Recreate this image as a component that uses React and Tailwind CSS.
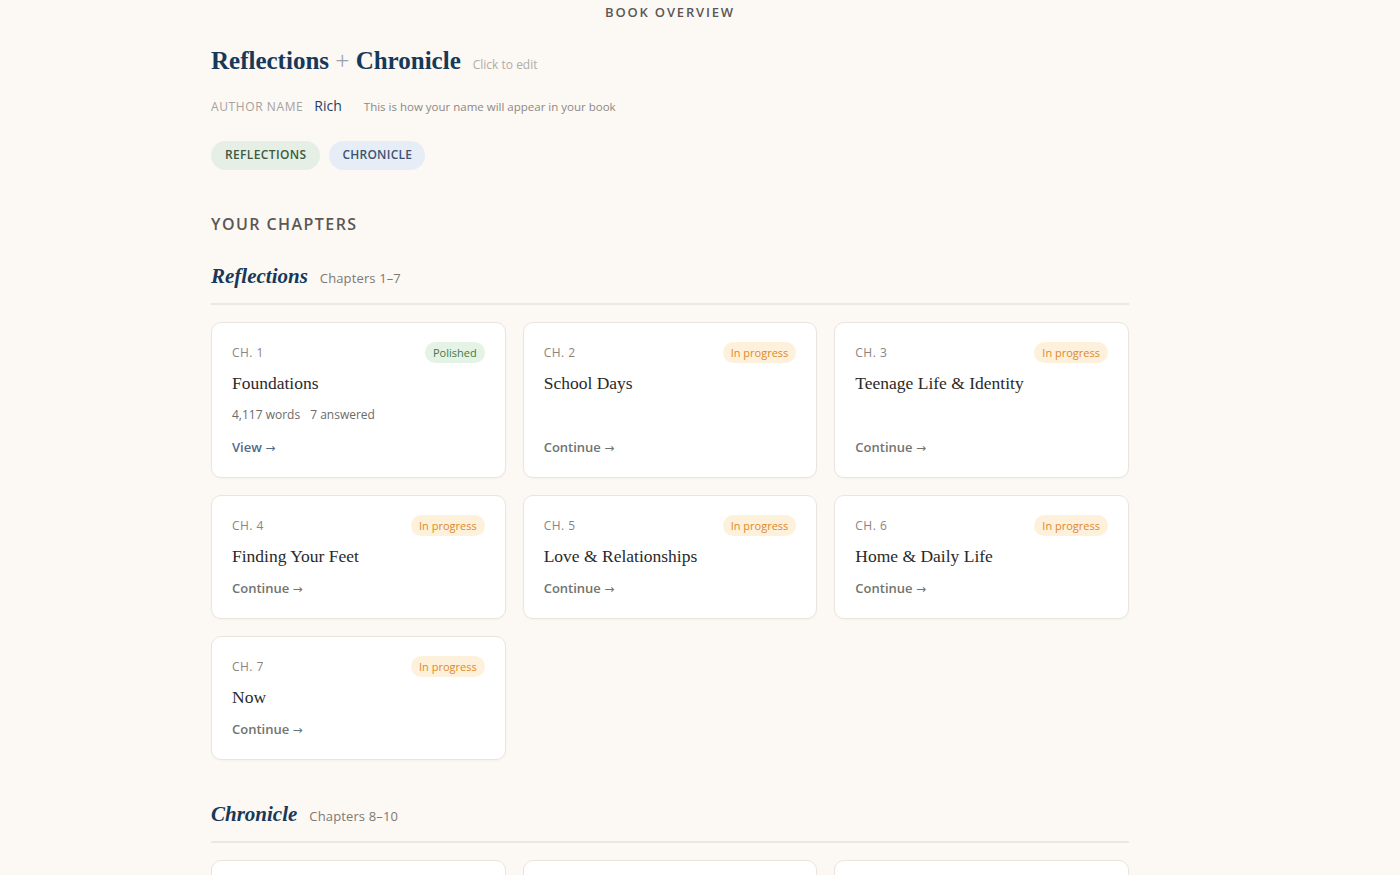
import React from 'react';

const sans = "font-['Open_Sans',sans-serif]";
const serif = "font-['Liberation_Serif',serif]";
const display = "font-['Liberation_Serif',serif]";

const reflections = [
    { ch: 1, title: 'Foundations', status: 'Polished', words: '4,117 words', answered: '7 answered', action: 'View' },
    { ch: 2, title: 'School Days', status: 'In progress' },
    { ch: 3, title: 'Teenage Life & Identity', status: 'In progress' },
    { ch: 4, title: 'Finding Your Feet', status: 'In progress' },
    { ch: 5, title: 'Love & Relationships', status: 'In progress' },
    { ch: 6, title: 'Home & Daily Life', status: 'In progress' },
    { ch: 7, title: 'Now', status: 'In progress' },
];

const chronicle = [
    { ch: 8, title: 'Milestones', status: 'In progress' },
    { ch: 9, title: 'Turning Points', status: 'In progress' },
    { ch: 10, title: 'Looking Ahead', status: 'In progress' },
];

const ChapterCard = ({ chapter }) => {
    const polished = chapter.status === 'Polished';
    return (
        <div className="flex flex-col bg-white border border-[#ebe5de] rounded-[10px] px-5 pt-[19px] pb-[19px] shadow-[0_1px_2px_rgba(0,0,0,0.03)]">
            <div className="flex items-center justify-between h-[22px]">
                <span className={`${sans} text-[12px] tracking-[0.04em] text-[#8a8580]`}>CH. {chapter.ch}</span>
                <span
                    className={`${sans} text-[11px] leading-none px-2 py-[5px] rounded-full ${
                        polished ? 'bg-[#e4f3e5] text-[#3f7a48]' : 'bg-[#fdf1dc] text-[#e0882a]'
                    }`}
                >
                    {chapter.status}
                </span>
            </div>
            <h3 className={`${serif} mt-[7px] text-[17.5px] leading-6 text-[#2a2a2a]`}>{chapter.title}</h3>
            {chapter.words && (
                <div className={`${sans} mt-[11px] mb-[3px] flex gap-[10px] text-[12px] leading-[18px] text-[#6f6a66]`}>
                    <span>{chapter.words}</span>
                    <span>{chapter.answered}</span>
                </div>
            )}
            <div
                className={`${sans} mt-auto pt-[10px] text-[13px] leading-5 font-semibold ${
                    chapter.action === 'View' ? 'text-[#4e6a8a]' : 'text-[#6f7470]'
                }`}
            >
                {chapter.action || 'Continue'} <span className="font-['DejaVu_Sans',sans-serif] font-normal text-[12px]">→</span>
            </div>
        </div>
    );
};

const Section = ({ name, range, chapters }) => (
    <div>
        <div className="flex items-baseline gap-3 pb-[13px] border-b-2 border-[#ece7e1]">
            <h2 className={`${display} italic font-bold text-[21px] leading-7 text-[#16395a]`}>{name}</h2>
            <span className={`${sans} text-[13px] tracking-[0.01em] text-[#7d7873]`}>{range}</span>
        </div>
        <div className="grid grid-cols-3 gap-[17px] mt-[17px]">
            {chapters.map((c) => (
                <ChapterCard key={c.ch} chapter={c} />
            ))}
        </div>
    </div>
);

export default function App() {
    return (
        <div className={`min-h-screen bg-[#fcf8f4] ${sans}`}>
            <div className="w-[1340px]">
                <div className="pt-[3px] text-center text-[13px] font-semibold tracking-[0.14em] text-[#5a5754]">
                    BOOK OVERVIEW
                </div>
                <div className="ml-[211px] w-[918px] pb-10">
                    <div className="mt-[22px] flex items-baseline gap-3">
                        <h1 className={`${display} font-bold text-[25px] leading-8 text-[#16395a]`}>
                            Reflections <span className="font-normal text-[#9aa3ad]">+</span> Chronicle
                        </h1>
                        <span className="text-[12px] text-[#b0aca8]">Click to edit</span>
                    </div>
                    <div className="mt-[18px] flex items-baseline">
                        <span className="text-[12px] tracking-[0.05em] text-[#a6a29e]">AUTHOR NAME</span>
                        <span className="ml-[11px] text-[14px] text-[#1f3f60]">Rich</span>
                        <span className="ml-[22px] text-[11.5px] text-[#8d8985]">
                            This is how your name will appear in your book
                        </span>
                    </div>
                    <div className="mt-[25px] flex gap-[9px]">
                        <span className="h-[29px] flex items-center px-[14px] rounded-full bg-[#e6efe6] text-[12px] font-semibold tracking-[0.03em] text-[#3e5a40]">
                            REFLECTIONS
                        </span>
                        <span className="h-[29px] flex items-center px-[13px] rounded-full bg-[#e6edf6] text-[12px] font-semibold tracking-[0.02em] text-[#3d5470]">
                            CHRONICLE
                        </span>
                    </div>
                    <div className="mt-[42px] text-[16px] font-semibold tracking-[0.09em] text-[#5a5754]">
                        YOUR CHAPTERS
                    </div>
                    <div className="mt-[26px]">
                        <Section name="Reflections" range="Chapters 1–7" chapters={reflections} />
                    </div>
                    <div className="mt-[40px]">
                        <Section name="Chronicle" range="Chapters 8–10" chapters={chronicle} />
                    </div>
                </div>
            </div>
        </div>
    );
}
